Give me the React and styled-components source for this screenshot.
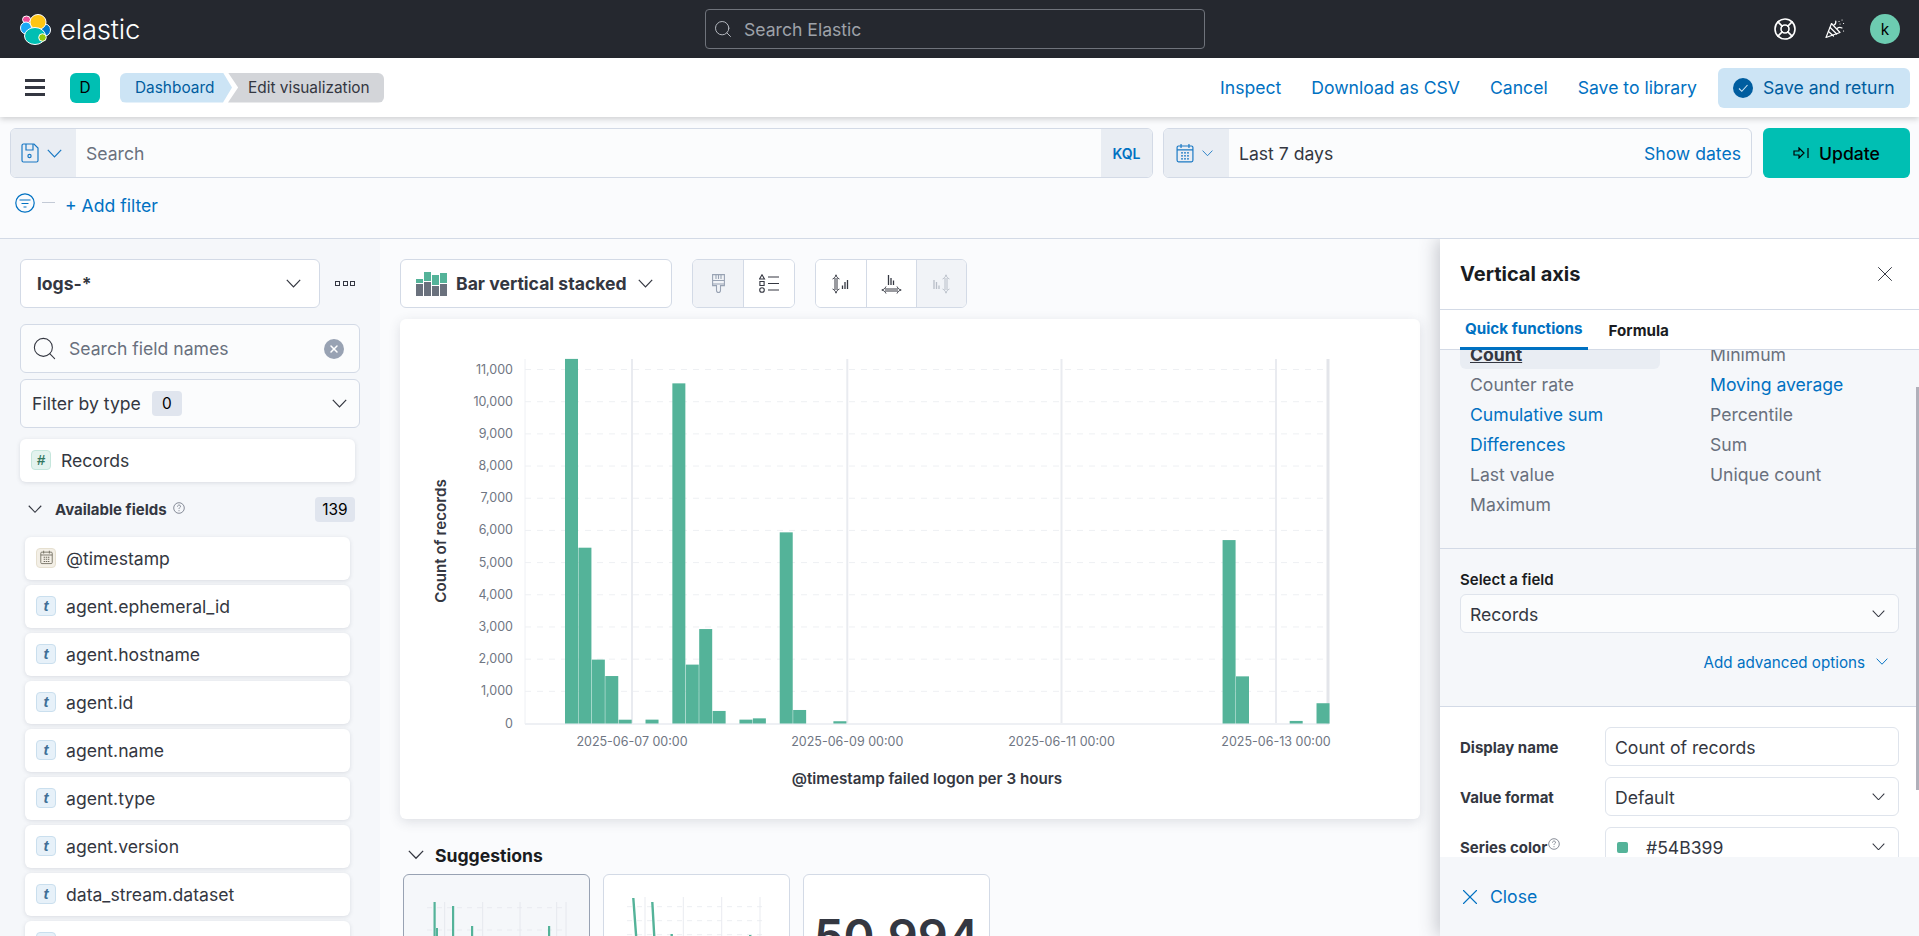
import React from "react";
import styled, { createGlobalStyle } from "styled-components";
import { LifeBuoy, Search, X } from "lucide-react";

const GlobalStyle = createGlobalStyle`
  html, body {
    margin: 0;
    padding: 0;
    height: 100%;
    overflow: hidden;
    background: #fafbfd;
    font-family: Inter, "Liberation Sans", sans-serif;
    color: #343741;
  }
  * { box-sizing: border-box; }
`;

const FIELDS = [
  "agent.ephemeral_id",
  "agent.hostname",
  "agent.id",
  "agent.name",
  "agent.type",
  "agent.version",
  "data_stream.dataset",
  "",
];

const FUNCTIONS = [
  { label: "Count", selected: true },
  { label: "Counter rate" },
  { label: "Cumulative sum", link: true },
  { label: "Differences", link: true },
  { label: "Last value" },
  { label: "Maximum" },
  { label: "Minimum" },
  { label: "Moving average", link: true },
  { label: "Percentile" },
  { label: "Sum" },
  { label: "Unique count" },
];

// bin index from the first bar, value
const BARS = [
  [0, 11330], [1, 5463], [2, 1985], [3, 1475], [4, 118], [6, 120], [8, 10570], [9, 1830],
  [10, 2935], [11, 390], [13, 120], [14, 160], [16, 5940], [17, 420], [20, 70],
  [49, 5700], [50, 1465], [54, 80], [56, 630],
];
const TICKS = [0, 1, 2, 3, 4, 5, 6, 7, 8, 9, 10, 11];
const DAYS = [
  { x: 632, label: "2025-06-07 00:00" },
  { x: 847.3, label: "2025-06-09 00:00" },
  { x: 1061.5, label: "2025-06-11 00:00" },
  { x: 1276, label: "2025-06-13 00:00" },
];
const BASE_Y = 723.5;
const PER_THOUSAND = 32.18;

function Chevron({ size = 15, color = "#343741" }) {
  return (
    <svg width={size} height={size * 0.6} viewBox="0 0 15 9" fill="none" stroke={color} strokeWidth="1.2">
      <path d="M.8.8l6.7 7 6.7-7" />
    </svg>
  );
}

function ElasticLogo() {
  return (
    <svg width="31" height="31" viewBox="0 0 31 31">
      <g stroke="#fff" strokeWidth="1">
        <ellipse cx="6.5" cy="5.5" rx="4" ry="3.5" fill="#f04e98" />
        <ellipse cx="6" cy="14" rx="5.5" ry="6" fill="#1ba9f5" />
        <ellipse cx="25" cy="16" rx="5.5" ry="6" fill="#0077cc" />
        <ellipse cx="18" cy="8" rx="8" ry="7.5" fill="#fec514" />
        <ellipse cx="15" cy="22" rx="10.5" ry="8.5" fill="#00bfb3" />
        <ellipse cx="22.5" cy="23.5" rx="3.8" ry="3.8" fill="#93c90e" />
      </g>
    </svg>
  );
}

function PartyIcon() {
  return (
    <svg width="20" height="20" viewBox="0 0 20 20" fill="none" stroke="#fff" strokeWidth="1.2" strokeLinecap="round" strokeLinejoin="round">
      <path d="M1 18.500L6.500 4.500l8.500 9z" />
      <path d="M3.500 12.500l5 4.500M5.200 8.500l6.500 6.500" />
      <path d="M9 6c1.500-.5 2-2 1.800-4M12 9.500c1.500-1.200 3.500-1.200 5-.5" />
      <path d="M14 2.500h.1M17 1h.1M15 5h.1M18.500 4.500h.1M18.500 12h.1" strokeWidth="1.1" />
    </svg>
  );
}

function SaveIcon() {
  return (
    <svg width="18" height="20" viewBox="0 0 18 20" fill="none" stroke="#1a79c4" strokeWidth="1.2">
      <path d="M1 2.500A1.500 1.500 0 0 1 2.500 1H13l4 4v12.500a1.500 1.500 0 0 1-1.500 1.500h-13A1.500 1.500 0 0 1 1 17.500z" />
      <path d="M5 1v6h7V1" />
      <circle cx="8.500" cy="13" r="1.600" />
    </svg>
  );
}

function CalendarIcon({ color = "#1a79c4", size = 18 }) {
  return (
    <svg width={size} height={size * 1.1} viewBox="0 0 18 20" fill="none" stroke={color} strokeWidth="1.2">
      <rect x="1" y="3" width="16" height="16" rx="1.500" />
      <path d="M1 7h16M5 1v4M13 1v4" />
      <path d="M5 10h2M8 10h2M11 10h2M5 13h2M8 13h2M11 13h2M5 16h2M8 16h2M11 16h2" strokeWidth="1.400" />
    </svg>
  );
}

function FilterCircle() {
  return (
    <svg width="20" height="20" viewBox="0 0 20 20" fill="none" stroke="#0071c2" strokeWidth="1.2">
      <circle cx="10" cy="10" r="9.200" />
      <path d="M4.500 7h11M6.500 10.500h7M8.500 14h3" />
    </svg>
  );
}

function UpdateIcon() {
  return (
    <svg width="16" height="12" viewBox="0 0 16 12" fill="none" stroke="#000" strokeWidth="1.2">
      <path d="M1 4h5V1l5 5-5 5V8H1zM15 1v10" />
    </svg>
  );
}

function BarStackedIcon() {
  return (
    <svg width="31" height="24" viewBox="0 0 31 24">
      <g fill="#6a717d">
        <rect x="0" y="12" width="7" height="12" />
        <rect x="8" y="10" width="7" height="14" />
        <rect x="16" y="14" width="7" height="10" />
        <rect x="24" y="12" width="7" height="12" />
      </g>
      <g fill="#54b399">
        <rect x="0" y="7" width="7" height="4" />
        <rect x="8" y="0" width="7" height="9" />
        <rect x="16" y="3" width="7" height="10" />
        <rect x="24" y="1" width="7" height="10" />
      </g>
    </svg>
  );
}

function BrushIcon() {
  return (
    <svg width="13" height="19" viewBox="0 0 13 19" fill="none" stroke="#98a2b3" strokeWidth="1.100">
      <path d="M.6.600h11.800v9.400H.6zM.6 6.500h11.800M4 .6v4.500M6.500.6v4.500M9 .6v4.500" />
      <path d="M.6 10v1.600h3.900v5a2 2 0 0 0 4 0v-5h3.900V10" />
    </svg>
  );
}

function LegendIcon() {
  return (
    <svg width="20" height="19" viewBox="0 0 20 19" fill="none" stroke="#343741" strokeWidth="1.100">
      <path d="M3 .8L5.500 5H.5zM.9 7.500h4.200v4H.9z" />
      <circle cx="3" cy="16" r="2.300" />
      <path d="M9 3h11M9 9.500h11M9 16h11" />
    </svg>
  );
}

function LeftAxisIcon({ color = "#343741" }) {
  return (
    <svg width="17" height="20" viewBox="0 0 17 20" fill="none" stroke={color} strokeWidth="1">
      <path d="M.6 5C2.500 4 3.500 3 4 .8 4.500 3 5.500 4 7.400 5M3 4v12M5 4v12M.6 15c1.900 1 2.900 2 3.400 4.200.5-2.200 1.500-3.200 3.400-4.200" />
      <path d="M10.500 15v-3.500M13 15V8M15.500 15V6" strokeWidth="1.300" />
    </svg>
  );
}

function RightAxisIcon({ color = "#b8bec8" }) {
  return (
    <svg width="17" height="20" viewBox="0 0 17 20" fill="none" stroke={color} strokeWidth="1">
      <path d="M9.600 5c1.900-1 2.900-2 3.400-4.200.5 2.200 1.500 3.200 3.400 4.200M12 4v12M14 4v12M9.600 15c1.900 1 2.900 2 3.400 4.200.5-2.200 1.500-3.200 3.400-4.200" />
      <path d="M1 15V6M3.500 15V8M6 15v-3.500" strokeWidth="1.300" />
    </svg>
  );
}

function BottomAxisIcon() {
  return (
    <svg width="21" height="20" viewBox="0 0 21 20" fill="none" stroke="#343741" strokeWidth="1">
      <path d="M7.500 11V1M10 11V4M12.500 11V6.500" strokeWidth="1.300" />
      <path d="M5 12.500C4 14.500 3 15.500.8 16c2.200.5 3.200 1.500 4.200 3.500M16 12.500c1 2 2 3 4.200 3.500-2.200.5-3.200 1.500-4.200 3.500M4 15h13M4 17h13" />
    </svg>
  );
}

function HelpIcon() {
  return (
    <svg width="12" height="12" viewBox="0 0 12 12" fill="none" stroke="#69707d" strokeWidth=".8">
      <circle cx="6" cy="6" r="5.300" />
      <path d="M4.500 4.600c0-2 3-2 3-.2 0 1.100-1.500 1.200-1.500 2.500M6 8.200v1" />
    </svg>
  );
}

function CheckCircle() {
  return (
    <svg width="20" height="20" viewBox="0 0 20 20">
      <circle cx="10" cy="10" r="10" fill="#005d9f" />
      <path d="M6 10.500l2.800 2.800L14.500 7" fill="none" stroke="#cce4f5" strokeWidth="1.100" />
    </svg>
  );
}

function MainChart() {
  return (
    <svg width="1020" height="500" viewBox="400 319 1020 500">
      {TICKS.map((t) => {
        const y = BASE_Y - t * PER_THOUSAND;
        return (
          <g key={t}>
            {t > 0 && <line x1="525" x2="1328" y1={y} y2={y} stroke="#eef0f3" strokeDasharray="6 6" />}
            <text x="513" y={y + 4} textAnchor="end" fontSize="12.500" fill="#6f7683">
              {t === 0 ? "0" : `${t},000`}
            </text>
          </g>
        );
      })}
      <line x1="525" x2="525" y1="359" y2="724" stroke="#eef0f4" />
      {DAYS.map((d) => (
        <g key={d.x}>
          <line x1={d.x} x2={d.x} y1="359" y2="724" stroke="#e9ebf0" strokeWidth="2" />
          <text x={d.x} y="746" textAnchor="middle" fontSize="12.500" fill="#6f7683">
            {d.label}
          </text>
        </g>
      ))}
      <line x1="525" x2="1329" y1="724" y2="724" stroke="#eef0f4" strokeWidth="2" />
      <line x1="1328" x2="1328" y1="359" y2="724" stroke="#e3e5ea" strokeWidth="3" />
      {BARS.map(([i, v]) => {
        const h = (v / 1000) * PER_THOUSAND;
        return <rect key={i} x={565 + i * 13.42} y={BASE_Y - h} width="13" height={h} fill="#54b399" />;
      })}
      <text transform="translate(446 541) rotate(-90)" textAnchor="middle" fontSize="15.200" fontWeight="600" fill="#343741">
        Count of records
      </text>
      <text x="927" y="784" textAnchor="middle" fontSize="15.200" fontWeight="600" fill="#343741">
        @timestamp failed logon per 3 hours
      </text>
    </svg>
  );
}

function MiniBars() {
  return (
    <svg width="185" height="62" viewBox="404 875 185 62">
      {[907.7, 930].map((y) => (
        <line key={y} x1="427" x2="563" y1={y} y2={y} stroke="#e9ebf0" strokeDasharray="5 5" />
      ))}
      {[444.7, 482.7, 520, 556.7, 566].map((x) => (
        <line key={x} x1={x} x2={x} y1="902" y2="937" stroke="#e6e8ee" />
      ))}
      <g fill="#54b399">
        <rect x="433.500" y="902" width="2.200" height="35" />
        <rect x="436" y="928" width="2" height="9" />
        <rect x="452" y="906" width="2.200" height="31" />
        <rect x="471" y="926" width="2.200" height="11" />
        <rect x="548" y="926" width="2.200" height="11" />
      </g>
    </svg>
  );
}

function MiniLine() {
  return (
    <svg width="185" height="62" viewBox="604 875 185 62">
      {[906.7, 920.7, 934.7].map((y) => (
        <line key={y} x1="627" x2="767" y1={y} y2={y} stroke="#eceef2" strokeDasharray="5 5" />
      ))}
      {[645, 683.3, 721.7, 760].map((x) => (
        <line key={x} x1={x} x2={x} y1="897" y2="937" stroke="#e9ebf0" />
      ))}
      <path d="M633.300 898L636.200 937M652.300 902L654.300 937" fill="none" stroke="#54b399" strokeWidth="2.400" />
      <rect x="670.500" y="934" width="2.400" height="3" fill="#54b399" />
      <rect x="749" y="935" width="2.400" height="2" fill="#54b399" />
    </svg>
  );
}

export default function App() {
  return (
    <>
      <GlobalStyle />
      <Page>
        <TopBar>
          <Brand>
            <ElasticLogo />
            <BrandName>elastic</BrandName>
          </Brand>
          <GlobalSearch>
            <Search size={20} strokeWidth={1.2} color="#b4b8bf" />
            <span>Search Elastic</span>
          </GlobalSearch>
          <TopIcons>
            <LifeBuoy size={24} strokeWidth={1.6} color="#fff" />
            <PartyIcon />
            <Avatar>k</Avatar>
          </TopIcons>
        </TopBar>

        <NavBar>
          <Burger>
            <i />
            <i />
            <i />
          </Burger>
          <SpaceBadge>D</SpaceBadge>
          <Crumbs>
            <CrumbFirst>Dashboard</CrumbFirst>
            <CrumbLast>Edit visualization</CrumbLast>
          </Crumbs>
          <NavLinks>
            <NavLink>Inspect</NavLink>
            <NavLink>Download as CSV</NavLink>
            <NavLink>Cancel</NavLink>
            <NavLink>Save to library</NavLink>
            <SaveButton>
              <CheckCircle />
              Save and return
            </SaveButton>
          </NavLinks>
        </NavBar>

        <QueryArea>
          <QueryRow>
            <QueryField>
              <Prepend>
                <SaveIcon />
                <Chevron size={15} color="#1a79c4" />
              </Prepend>
              <QueryText $muted>Search</QueryText>
              <KqlTag>KQL</KqlTag>
            </QueryField>
            <DateField>
              <Prepend>
                <CalendarIcon />
                <Chevron size={11} color="#1a79c4" />
              </Prepend>
              <QueryText>Last 7 days</QueryText>
              <ShowDates>Show dates</ShowDates>
            </DateField>
            <UpdateButton>
              <UpdateIcon />
              Update
            </UpdateButton>
          </QueryRow>
          <FilterRow>
            <FilterCircle />
            <FilterDash />
            <AddFilter>+ Add filter</AddFilter>
          </FilterRow>
        </QueryArea>

        <Body>
          <Sidebar>
            <PatternRow>
              <PatternButton>
                logs-*
                <Chevron />
              </PatternButton>
              <DotsIcon>
                <i />
                <i />
                <i />
              </DotsIcon>
            </PatternRow>
            <FieldSearch>
              <Search size={27} strokeWidth={0.95} color="#343741" />
              <span>Search field names</span>
              <ClearDot>
                <X size={12} strokeWidth={3} color="#fff" />
              </ClearDot>
            </FieldSearch>
            <TypeFilter>
              Filter by type
              <CountPill>0</CountPill>
              <TypeChevron>
                <Chevron />
              </TypeChevron>
            </TypeFilter>
            <RecordsRow>
              <TypeBadge $tone="number">#</TypeBadge>
              Records
            </RecordsRow>
            <AvailableRow>
              <Chevron size={14} />
              <AvailableTitle>Available fields</AvailableTitle>
              <HelpRaised>
                <HelpIcon />
              </HelpRaised>
              <TotalPill>139</TotalPill>
            </AvailableRow>
            <FieldList>
              <FieldRow>
                <TypeBadge $tone="date">
                  <CalendarIcon color="#6e6a5e" size={13} />
                </TypeBadge>
                @timestamp
              </FieldRow>
              {FIELDS.map((f) => (
                <FieldRow key={f}>
                  <TypeBadge $tone="text">t</TypeBadge>
                  {f}
                </FieldRow>
              ))}
            </FieldList>
          </Sidebar>

          <Main>
            <Toolbar>
              <ChartTypeButton>
                <BarStackedIcon />
                <span>Bar vertical stacked</span>
                <Chevron />
              </ChartTypeButton>
              <ToolGroup>
                <ToolButton $active>
                  <BrushIcon />
                </ToolButton>
                <ToolButton>
                  <LegendIcon />
                </ToolButton>
              </ToolGroup>
              <ToolGroup>
                <ToolButton>
                  <LeftAxisIcon />
                </ToolButton>
                <ToolButton>
                  <BottomAxisIcon />
                </ToolButton>
                <ToolButton $active>
                  <RightAxisIcon />
                </ToolButton>
              </ToolGroup>
            </Toolbar>
            <ChartCard>
              <MainChart />
            </ChartCard>
            <SuggestionsTitle>
              <Chevron size={16} />
              Suggestions
            </SuggestionsTitle>
            <SuggestionRow>
              <SuggestionCard $current>
                <MiniBars />
              </SuggestionCard>
              <SuggestionCard>
                <MiniLine />
              </SuggestionCard>
              <SuggestionCard>
                <BigMetric>50,994</BigMetric>
              </SuggestionCard>
            </SuggestionRow>
          </Main>

          <Flyout>
            <FlyoutHeader>
              <FlyoutTitle>Vertical axis</FlyoutTitle>
              <X size={26} strokeWidth={0.9} color="#343741" />
            </FlyoutHeader>
            <Tabs>
              <Tab $active>Quick functions</Tab>
              <Tab>Formula</Tab>
            </Tabs>
            <FlyoutBody>
              <FunctionsSection>
                <FunctionGrid>
                  {FUNCTIONS.map((f) => (
                    <FunctionItem key={f.label} $link={f.link} $selected={f.selected}>
                      <span>{f.label}</span>
                    </FunctionItem>
                  ))}
                </FunctionGrid>
              </FunctionsSection>
              <FieldSection>
                <FieldLabel>Select a field</FieldLabel>
                <SelectBox>
                  <span>Records</span>
                  <Chevron size={13} />
                </SelectBox>
                <AdvancedLink>
                  Add advanced options
                  <Chevron size={12} color="#0071c2" />
                </AdvancedLink>
              </FieldSection>
              <DisplaySection>
                <FormRow>
                  <FormLabel>Display name</FormLabel>
                  <SelectBox $white>
                    <span>Count of records</span>
                  </SelectBox>
                </FormRow>
                <FormRow>
                  <FormLabel>Value format</FormLabel>
                  <SelectBox $white>
                    <span>Default</span>
                    <Chevron size={13} />
                  </SelectBox>
                </FormRow>
                <FormRow>
                  <FormLabel>
                    Series color
                    <HelpIcon />
                  </FormLabel>
                  <SelectBox $white>
                    <ColorValue>
                      <Swatch />
                      #54B399
                    </ColorValue>
                    <Chevron size={13} />
                  </SelectBox>
                </FormRow>
              </DisplaySection>
              <ScrollThumb />
            </FlyoutBody>
            <FlyoutFooter>
              <X size={26} strokeWidth={1} color="#0071c2" />
              Close
            </FlyoutFooter>
          </Flyout>
        </Body>
      </Page>
    </>
  );
}

const Page = styled.div`
  height: 936px;
  display: flex;
  flex-direction: column;
  overflow: hidden;
`;

const TopBar = styled.header`
  height: 58px;
  flex: none;
  background: #25282f;
  display: grid;
  grid-template-columns: 705px 500px 1fr;
  align-items: center;
`;

const Brand = styled.div`
  display: flex;
  align-items: center;
  gap: 9px;
  padding-left: 20px;
`;

const BrandName = styled.span`
  color: #fff;
  font-size: 27.5px;
  font-weight: 300;
  letter-spacing: -0.2px;
`;

const GlobalSearch = styled.div`
  height: 40px;
  border: 1px solid #6f737b;
  border-radius: 4px;
  background: #25282f;
  display: flex;
  align-items: center;
  gap: 11px;
  padding-left: 7px;
  font-size: 17.6px;
  color: #9ea2a9;
`;

const TopIcons = styled.div`
  display: flex;
  align-items: center;
  justify-content: flex-end;
  gap: 25px;
  padding-right: 19px;
  > svg:first-child {
    margin-right: 3px;
  }
`;

const Avatar = styled.div`
  width: 30px;
  height: 30px;
  border-radius: 50%;
  background: #6dccb1;
  color: #000;
  font-size: 15.4px;
  display: flex;
  align-items: center;
  justify-content: center;
`;

const NavBar = styled.div`
  height: 59px;
  flex: none;
  background: #fff;
  display: flex;
  align-items: center;
  padding: 0 9px 0 25px;
  box-shadow: 0 2px 6px rgba(0, 0, 0, 0.18);
  position: relative;
  z-index: 2;
`;

const Burger = styled.div`
  width: 20px;
  display: flex;
  flex-direction: column;
  gap: 4px;
  i {
    display: block;
    height: 3px;
    background: #343741;
  }
`;

const SpaceBadge = styled.div`
  width: 30px;
  height: 30px;
  margin-left: 25px;
  border-radius: 6px;
  background: #00bfb3;
  color: #000;
  font-size: 15.4px;
  display: flex;
  align-items: center;
  justify-content: center;
`;

const Crumbs = styled.div`
  display: flex;
  margin-left: 20px;
  height: 30px;
  font-size: 15.4px;
`;

const CrumbFirst = styled.div`
  width: 112px;
  background: #cce4f5;
  color: #005d9f;
  display: flex;
  align-items: center;
  padding-left: 15px;
  border-radius: 6px 0 0 6px;
  clip-path: polygon(0 0, 92% 0, 100% 50%, 92% 100%, 0 100%);
`;

const CrumbLast = styled.div`
  width: 156px;
  margin-left: -4px;
  background: #d3d5d9;
  color: #343741;
  display: flex;
  align-items: center;
  padding-left: 20px;
  border-radius: 0 6px 6px 0;
  clip-path: polygon(0 0, 100% 0, 100% 100%, 0 100%, 6.5% 50%);
`;

const NavLinks = styled.div`
  margin-left: auto;
  display: flex;
  align-items: center;
  gap: 30px;
`;

const NavLink = styled.span`
  color: #0071c2;
  font-size: 17.6px;
`;

const SaveButton = styled.div`
  width: 192px;
  height: 40px;
  margin-left: -9px;
  background: #cce4f5;
  color: #005d9f;
  border-radius: 6px;
  display: flex;
  align-items: center;
  gap: 10px;
  padding-left: 15px;
  font-size: 17.6px;
`;

const QueryArea = styled.div`
  height: 122px;
  flex: none;
  padding: 11px 9px 0 10px;
  background: #fafbfd;
  border-bottom: 1px solid #d3dae6;
`;

const QueryRow = styled.div`
  display: flex;
  gap: 10px;
  height: 50px;
`;

const QueryField = styled.div`
  flex: 1;
  display: flex;
  align-items: stretch;
  background: #fbfcfd;
  border: 1px solid #d3dae6;
  border-radius: 6px;
  overflow: hidden;
`;

const DateField = styled(QueryField)`
  flex: none;
  width: 589px;
`;

const Prepend = styled.div`
  width: 65px;
  padding-right: 4px;
  background: #e9edf3;
  display: flex;
  align-items: center;
  justify-content: center;
  gap: 8px;
`;

const QueryText = styled.div`
  flex: 1;
  display: flex;
  align-items: center;
  padding: 1px 0 0 10px;
  font-size: 17.6px;
  color: ${(p) => (p.$muted ? "#6a717d" : "#343741")};
`;

const KqlTag = styled.div`
  width: 51px;
  background: #e9edf3;
  color: #0071c2;
  font-size: 14px;
  font-weight: 600;
  display: flex;
  align-items: center;
  justify-content: center;
`;

const ShowDates = styled.div`
  color: #0071c2;
  font-size: 17.6px;
  display: flex;
  align-items: center;
  padding: 1px 10px 0 0;
`;

const UpdateButton = styled.div`
  width: 147px;
  margin-left: 1px;
  background: #00bfb3;
  color: #000;
  border-radius: 6px;
  display: flex;
  align-items: center;
  justify-content: center;
  gap: 10px;
  font-size: 17.6px;
  font-weight: 500;
`;

const FilterRow = styled.div`
  height: 30px;
  margin-top: 12px;
  padding-left: 5px;
  display: flex;
  align-items: center;
  svg {
    margin-bottom: 4px;
  }
`;

const FilterDash = styled.div`
  width: 13px;
  height: 1px;
  margin: 0 10px 6px 7px;
  background: #c3cad6;
`;

const AddFilter = styled.span`
  color: #0071c2;
  font-size: 17.6px;
  padding-top: 1px;
`;

const Body = styled.div`
  flex: 1;
  min-height: 0;
  display: flex;
  overflow: hidden;
`;

const Sidebar = styled.aside`
  width: 380px;
  flex: none;
  padding: 20px 20px 0;
  background: #f5f7fa;
  overflow: hidden;
`;

const PatternRow = styled.div`
  display: flex;
  align-items: center;
  gap: 15px;
`;

const PatternButton = styled.div`
  width: 300px;
  height: 49px;
  background: #fff;
  border: 1px solid #d3dae6;
  border-radius: 6px;
  padding: 0 18px 0 16px;
  display: flex;
  align-items: center;
  justify-content: space-between;
  font-size: 17.6px;
  font-weight: 700;
`;

const DotsIcon = styled.div`
  display: flex;
  gap: 2.5px;
  i {
    width: 5px;
    height: 5px;
    border: 1px solid #343741;
  }
`;

const FieldSearch = styled.div`
  width: 340px;
  height: 49px;
  margin-top: 16px;
  padding: 0 15px 0 10px;
  background: #fbfcfd;
  border: 1px solid #d3dae6;
  border-radius: 6px;
  display: flex;
  align-items: center;
  gap: 11px;
  font-size: 17.6px;
  color: #69707d;
  span {
    flex: 1;
  }
`;

const ClearDot = styled.div`
  width: 20px;
  height: 20px;
  border-radius: 50%;
  background: #98a2b3;
  display: flex;
  align-items: center;
  justify-content: center;
`;

const TypeFilter = styled.div`
  width: 340px;
  height: 49px;
  margin-top: 6px;
  padding: 0 12px 0 11px;
  background: #fbfcfd;
  border: 1px solid #d3dae6;
  border-radius: 6px;
  display: flex;
  align-items: center;
  font-size: 17.6px;
`;

const CountPill = styled.span`
  width: 30px;
  height: 25px;
  margin-left: 11px;
  border-radius: 4px;
  background: #e0e5ee;
  color: #000;
  font-size: 15.4px;
  display: flex;
  align-items: center;
  justify-content: center;
`;

const TypeChevron = styled.span`
  margin-left: auto;
  display: flex;
`;

const RecordsRow = styled.div`
  width: 335px;
  height: 43px;
  margin-top: 11px;
  padding-left: 11px;
  background: #fff;
  border-radius: 6px;
  box-shadow: 0 1px 4px rgba(60, 70, 90, 0.15);
  display: flex;
  align-items: center;
  gap: 10px;
  font-size: 17.6px;
`;

const BADGE_TONES = {
  number: { bg: "#e3f3ee", border: "#c5e6dc", color: "#33775f" },
  date: { bg: "#f3efe6", border: "#e6e0d0", color: "#6e6a5e" },
  text: { bg: "#e7f1f9", border: "#cadfee", color: "#3f6f96" },
};

const TypeBadge = styled.span`
  width: 20px;
  height: 20px;
  flex: none;
  margin-bottom: 2px;
  border-radius: 4px;
  background: ${(p) => BADGE_TONES[p.$tone].bg};
  border: 1px solid ${(p) => BADGE_TONES[p.$tone].border};
  color: ${(p) => BADGE_TONES[p.$tone].color};
  font-family: "Liberation Sans", sans-serif;
  font-size: 15px;
  font-weight: 700;
  font-style: italic;
  display: flex;
  align-items: center;
  justify-content: center;
`;

const AvailableRow = styled.div`
  width: 335px;
  height: 25px;
  margin-top: 15px;
  padding-left: 8px;
  display: flex;
  align-items: center;
`;

const AvailableTitle = styled.span`
  margin-left: 13px;
  font-size: 15px;
  font-weight: 700;
`;

const HelpRaised = styled.span`
  display: flex;
  margin: 0 0 4px 6px;
`;

const TotalPill = styled.span`
  width: 40px;
  height: 25px;
  margin-left: auto;
  border-radius: 4px;
  background: #e0e5ee;
  color: #000;
  font-size: 15.4px;
  display: flex;
  align-items: center;
  justify-content: center;
`;

const FieldList = styled.div`
  width: 325px;
  margin: 15px 0 0 5px;
  display: flex;
  flex-direction: column;
  gap: 5px;
`;

const FieldRow = styled.div`
  height: 43px;
  flex: none;
  padding-left: 11px;
  background: #fff;
  border-radius: 6px;
  box-shadow: 0 1px 4px rgba(60, 70, 90, 0.15);
  display: flex;
  align-items: center;
  gap: 10px;
  font-size: 17.6px;
  color: #343741;
`;

const Main = styled.main`
  width: 1060px;
  flex: none;
  padding: 20px 20px 0;
  overflow: hidden;
`;

const Toolbar = styled.div`
  height: 49px;
  display: flex;
  gap: 20px;
`;

const ChartTypeButton = styled.div`
  width: 272px;
  background: #fff;
  border: 1px solid #d3dae6;
  border-radius: 6px;
  padding: 0 18px 0 15px;
  display: flex;
  align-items: center;
  font-size: 17.6px;
  font-weight: 700;
  span {
    margin: 0 auto 0 9px;
  }
`;

const ToolGroup = styled.div`
  display: flex;
  background: #fff;
  border: 1px solid #d3dae6;
  border-radius: 6px;
  overflow: hidden;
`;

const ToolButton = styled.div`
  width: 50.3px;
  background: ${(p) => (p.$active ? "#f1f3f7" : "#fff")};
  display: flex;
  align-items: center;
  justify-content: center;
  & + & {
    border-left: 1px solid #d3dae6;
  }
`;

const ChartCard = styled.section`
  width: 1020px;
  height: 500px;
  margin-top: 11px;
  background: #fff;
  border-radius: 6px;
  box-shadow: 0 3px 12px rgba(60, 70, 90, 0.15);
`;

const SuggestionsTitle = styled.h3`
  margin: 24px 0 0 8px;
  height: 24px;
  display: flex;
  align-items: center;
  gap: 11px;
  font-size: 17.6px;
  font-weight: 700;
  color: #1a1c21;
`;

const SuggestionRow = styled.div`
  margin: 7px 0 0 3px;
  display: flex;
  gap: 13px;
`;

const SuggestionCard = styled.div`
  width: 187px;
  height: 150px;
  border-radius: 6px;
  background: ${(p) => (p.$current ? "#f5f7fa" : "#fff")};
  border: 1px solid ${(p) => (p.$current ? "#98a2b3" : "#d3dae6")};
  overflow: hidden;
`;

const BigMetric = styled.div`
  margin-top: 33px;
  text-align: center;
  font-size: 47px;
  line-height: 56px;
  font-weight: 600;
  color: #343741;
`;

const Flyout = styled.aside`
  flex: 1;
  min-width: 0;
  display: flex;
  flex-direction: column;
  background: #fff;
  box-shadow: -4px 0 16px rgba(60, 65, 80, 0.25);
  position: relative;
  z-index: 1;
`;

const FlyoutHeader = styled.div`
  height: 71px;
  flex: none;
  padding: 0 21px 0 20px;
  border-bottom: 1px solid #d3dae6;
  display: flex;
  align-items: center;
  justify-content: space-between;
`;

const FlyoutTitle = styled.h2`
  margin: 0;
  font-size: 20px;
  font-weight: 700;
  color: #1a1c21;
`;

const Tabs = styled.div`
  height: 40px;
  flex: none;
  padding-left: 20px;
  border-bottom: 1px solid #d3dae6;
  display: flex;
  gap: 16px;
`;

const Tab = styled.div`
  padding: 0 5px;
  height: 40px;
  display: flex;
  align-items: center;
  font-size: 15.2px;
  font-weight: 700;
  color: ${(p) => (p.$active ? "#0071c2" : "#1a1c21")};
  border-bottom: ${(p) => (p.$active ? "3px solid #0071c2" : "none")};
`;

const FlyoutBody = styled.div`
  flex: 1;
  min-height: 0;
  overflow: hidden;
  position: relative;
  background: #fff;
`;

const FunctionsSection = styled.div`
  height: 199px;
  padding-left: 20px;
  background: #f5f7fa;
  border-bottom: 1px solid #d3dae6;
  overflow: hidden;
`;

const FunctionGrid = styled.div`
  margin-top: -11px;
  display: grid;
  grid-auto-flow: column;
  grid-template-rows: repeat(6, 30px);
  grid-template-columns: 200px 200px;
  column-gap: 40px;
`;

const FunctionItem = styled.div`
  height: 30px;
  padding-left: 10px;
  display: flex;
  align-items: center;
  font-size: 17.6px;
  border-radius: 6px;
  color: ${(p) => (p.$link ? "#0071c2" : p.$selected ? "#343741" : "#69707d")};
  font-weight: ${(p) => (p.$selected ? 700 : 400)};
  background: ${(p) => (p.$selected ? "#e9edf3" : "transparent")};
  span {
    text-decoration: ${(p) => (p.$selected ? "underline" : "none")};
  }
`;

const FieldSection = styled.div`
  height: 158px;
  padding: 22px 20px 0;
  background: #f5f7fa;
  border-bottom: 1px solid #d3dae6;
`;

const FieldLabel = styled.div`
  height: 18px;
  line-height: 18px;
  font-size: 15px;
  font-weight: 600;
  color: #1a1c21;
`;

const SelectBox = styled.div`
  height: 39px;
  margin-top: 5px;
  padding: 0 13px 0 9px;
  background: ${(p) => (p.$white ? "#fff" : "#fbfcfd")};
  border: 1px solid #dfe4ec;
  border-radius: 6px;
  display: flex;
  align-items: center;
  justify-content: space-between;
  font-size: 17.6px;
  color: #343741;
  span {
    padding-top: 2px;
  }
`;

const AdvancedLink = styled.div`
  height: 22px;
  margin-top: 18px;
  padding-right: 11px;
  display: flex;
  align-items: center;
  justify-content: flex-end;
  gap: 11px;
  font-size: 15.2px;
  color: #0071c2;
`;

const DisplaySection = styled.div`
  padding: 20px 20px 0;
  display: flex;
  flex-direction: column;
  gap: 11px;
`;

const FormRow = styled.div`
  display: grid;
  grid-template-columns: 145px 1fr;
  align-items: center;
  ${SelectBox} {
    margin-top: 0;
  }
`;

const FormLabel = styled.div`
  display: flex;
  align-items: flex-start;
  gap: 1px;
  padding-top: 2px;
  font-size: 15px;
  font-weight: 700;
  color: #343741;
`;

const ColorValue = styled.span`
  display: flex;
  align-items: center;
  gap: 18px;
  padding-left: 2px;
`;

const Swatch = styled.span`
  width: 11px;
  height: 11px;
  border-radius: 2px;
  background: #54b399;
`;

const ScrollThumb = styled.div`
  position: absolute;
  top: 37px;
  right: 0;
  width: 3px;
  height: 403px;
  background: #b0b0ba;
`;

const FlyoutFooter = styled.div`
  height: 79px;
  flex: none;
  padding-left: 17px;
  background: #f5f7fa;
  display: flex;
  align-items: center;
  gap: 7px;
  font-size: 17.6px;
  color: #0071c2;
`;
